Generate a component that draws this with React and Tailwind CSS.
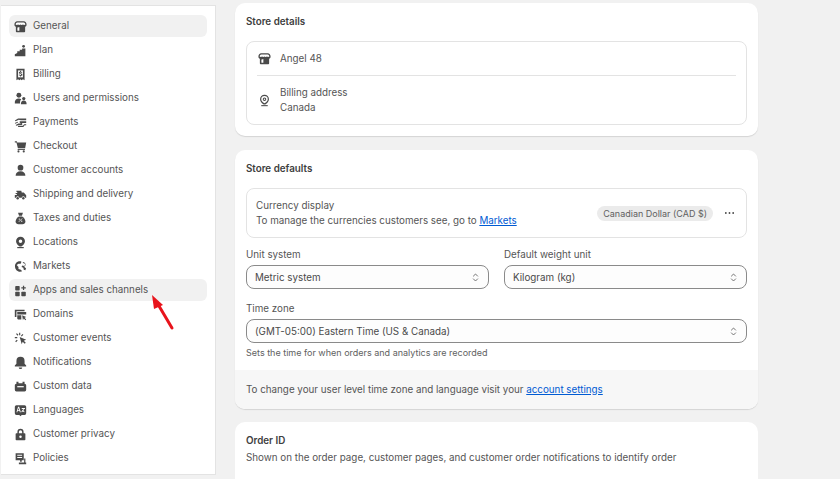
const ICONS = {
  store: (
    <>
      <path d="M4 1.500h8c2 0 3.500 2 3.500 4.200 0 1.200-.8 2.100-1.800 2.500V14a1 1 0 0 1-1 1H3.300a1 1 0 0 1-1-1V8.200C1.300 7.800.5 6.900.5 5.700.5 3.500 2 1.500 4 1.500z" />
      <path fill="#fff" d="M4 3.200h8c1 0 1.800 1 2 2.300-.9.800-2 .800-3 0-.9.800-2.100.800-3 0-.9.800-2.100.800-3 0-1 .800-2.100.800-3 0 .2-1.300 1-2.300 2-2.300zM4.200 9.200c.9.100 1.700-.1 2.400-.5v4.600H4.200z" />
    </>
  ),
  plan: (
    <>
      <path d="M1 15v-2.500l3-1.500V9h3V7h3V5.500h4V15z" />
      <circle cx="11.800" cy="2.800" r="1.700" />
    </>
  ),
  billing: (
    <>
      <path d="M3 1h10v14l-2-1.300L9.300 15 8 13.700 6.700 15 5 13.700 3 15z" />
      <path fill="#fff" d="M5 3h6v8.500H5z" />
      <path d="M7.500 3.500h1.200v1c.7.100 1.200.4 1.500.8l-.7.800c-.5-.5-1.900-.7-1.900 0 0 .8 2.800.5 2.800 2.100 0 .8-.6 1.300-1.700 1.400v1H7.500v-1c-.7-.1-1.300-.4-1.700-.9l.7-.8c.6.600 2.300.9 2.300.1 0-.8-2.800-.5-2.800-2.100 0-.8.600-1.300 1.500-1.400z" />
    </>
  ),
  users: (
    <>
      <circle cx="6" cy="4" r="3" />
      <path d="M1 14c-.4-3.700 1.600-6 5-6 1.200 0 2.200.3 3 .9C7.700 10 7.300 12 7.500 14z" />
      <circle cx="12" cy="8" r="2" />
      <path d="M8.500 15c-.2-2.600 1.200-4.500 3.500-4.500s3.700 1.900 3.500 4.500z" />
    </>
  ),
  payments: (
    <>
      <path d="M5 3h10v2.300H8.500L5.800 4.700 2 6.500 1 5.500z" />
      <path d="M7 6.500h8v2H9.500l1 1.200-1 1.300H6L3 12l-1-1 3.500-1.700h3L7 8z" />
      <path d="M1 8.500 4.500 7l.5 1-3.500 1.500zM5 12h6l1.500-2h2.500v1.500h-2L11.500 13.500H5z" />
    </>
  ),
  cart: (
    <>
      <path d="M1 1.500h2.500l.4 1.500H15l-1.300 7H4.800L3 3H1z" />
      <path d="M4.500 11h9v1.200h-9z" />
      <circle cx="5.500" cy="14" r="1.300" />
      <circle cx="12" cy="14" r="1.300" />
    </>
  ),
  person: (
    <>
      <circle cx="8" cy="4.500" r="3.500" />
      <path d="M2 14.500c0-3.500 2.500-5.500 6-5.500s6 2 6 5.500z" />
    </>
  ),
  truck: (
    <>
      <path d="M3 3.500h6l.5 2H12l3 3.500v3h-1.500a2 2 0 0 0-4 0H6.500a2 2 0 0 0-4 0H1V8.500h2.500V7.500H2V6h2V5H3z" />
      <circle cx="4.500" cy="12.500" r="1.500" />
      <circle cx="11.500" cy="12.500" r="1.500" />
    </>
  ),
  bag: (
    <>
      <path d="M5 1h6L9.800 4.500H6.200z" />
      <path d="M6 5.500h4c2.500 1.500 4 4 4 6.300C14 14 12.500 15 10.500 15h-5C3.500 15 2 14 2 11.800c0-2.300 1.500-4.800 4-6.300z" />
      <path stroke="#fff" strokeWidth="1" fill="none" d="m6 12 4-4" />
      <circle cx="6.500" cy="8.700" r=".8" fill="#fff" />
      <circle cx="9.500" cy="11.300" r=".8" fill="#fff" />
    </>
  ),
  pin: (
    <>
      <path fillRule="evenodd" d="M8 1a5.500 5.500 0 0 1 5.500 5.500c0 2.800-2.200 5.100-4.500 6.300H7C4.700 11.600 2.500 9.300 2.500 6.500A5.500 5.500 0 0 1 8 1zm0 3.300a2.200 2.200 0 1 0 0 4.400 2.200 2.200 0 0 0 0-4.400z" />
      <path d="M4 13.500h8V15H4z" />
    </>
  ),
  pinOutline: (
    <>
      <path fillRule="evenodd" d="M8 1a5.500 5.500 0 0 1 5.500 5.500c0 2.800-2.200 5.100-4.500 6.300H7C4.700 11.600 2.500 9.300 2.500 6.500A5.500 5.500 0 0 1 8 1zm0 1.500a4 4 0 0 0-4 4c0 2 1.800 3.800 4 4.900 2.200-1.100 4-2.900 4-4.900a4 4 0 0 0-4-4z" />
      <path fillRule="evenodd" d="M8 4.300a2.200 2.200 0 1 1 0 4.400 2.200 2.200 0 0 1 0-4.400zm0 1.300a.9.900 0 1 0 0 1.800.9.900 0 0 0 0-1.800z" />
      <path d="M4 13.700h8V15H4z" />
    </>
  ),
  globe: (
    <>
      <path d="M7 1.500c-3.300 0-5.800 2.800-5.800 6.200C1.200 11.500 4 14.500 7.500 14.500c1 0 1.800-.2 2.500-.6L8.500 12l-3-1V8.500L3.300 6.300 5.500 4.500l2.700.2 1-2.700C8.600 1.700 7.800 1.500 7 1.500z" />
      <path d="M10.500 3.500 14 5l-1.500 2.500-2.300-.7-1 1.700 2.300 1 .5 2.500 2 .7.800-2.700-2-1.500.2-1.500 1.500-.5-.7-2.500L12 2.500z" />
    </>
  ),
  apps: (
    <>
      <rect x="1.500" y="2.500" width="5.500" height="5.500" rx="1" />
      <rect x="1.500" y="9.500" width="5.500" height="5.500" rx="1" />
      <rect x="9" y="9.500" width="5.500" height="5.500" rx="1" />
      <path d="M11 2h1.500v2h2v1.500h-2v2H11v-2H9V4h2z" />
    </>
  ),
  domains: (
    <>
      <path d="M1 2h12v2H3v7H1z" />
      <path d="M4 5h11v3H4zM4 9h5v5H5a1 1 0 0 1-1-1z" />
      <path d="m10 9 5 2-2 1 2 2-1 1-2-2-1 2z" />
    </>
  ),
  events: (
    <>
      <path d="m7 6 8 3.500-3 1.200 2.500 2.500-1.300 1.300-2.500-2.500L9.500 15z" />
      <path d="M6.300 1h1.400v3H6.300zM1 6.300h3v1.400H1zM2.500 2.500l1-1 2 2-1 1zM10.500 2.500l1 1-2 2-1-1zM3.500 9.500l1 1-2 2-1-1z" />
    </>
  ),
  bell: (
    <>
      <path d="M8 1a5 5 0 0 1 5 5v3.500l2 2.300V13H1v-1.200l2-2.300V6a5 5 0 0 1 5-5z" />
      <path d="M5.800 14h4.400a2.200 2 0 0 1-4.400 0z" />
    </>
  ),
  data: (
    <>
      <path d="M3 2h2.500v2h5V2H13v2.500c1.200.2 2 1 2 2.200V12a2 2 0 0 1-2 2H3a2 2 0 0 1-2-2V6.700c0-1.200.8-2 2-2.200z" />
      <path fill="#fff" d="M4 7.500h8V9H4z" />
    </>
  ),
  lang: (
    <>
      <path d="M3 1.500h10A2 2 0 0 1 15 3.500v8a2 2 0 0 1-2 2H9.500L8 15l-1.500-1.500H3a2 2 0 0 1-2-2v-8a2 2 0 0 1 2-2z" />
      <path fill="#fff" d="M5 3.500h1.300L8.400 10H7.200l-.4-1.300H4.500L4.100 10H3zM5.650 5l-.8 2.600h1.600zM9.500 5h4v1h-.9c-.2 1-.6 1.800-1 2.400l1.500 1-.5.800-1.700-1.100-1.500 1.200-.6-.8 1.500-1.100-.6-1 .9-.4.400.7c.3-.5.500-1 .6-1.700H9.500z" />
    </>
  ),
  lock: (
    <>
      <path fillRule="evenodd" d="M8 1a3.800 3.800 0 0 1 3.800 3.800V6.500H13a1 1 0 0 1 1 1V14a1 1 0 0 1-1 1H3a1 1 0 0 1-1-1V7.500a1 1 0 0 1 1-1h1.200V4.800A3.800 3.800 0 0 1 8 1zm0 1.800a2 2 0 0 0-2 2v1.700h4V4.800a2 2 0 0 0-2-2z" />
      <circle cx="8" cy="10.800" r="1.500" fill="#fff" />
    </>
  ),
  policies: (
    <>
      <path fillRule="evenodd" d="M2 1.500h10v8.500H9.500v2H7.500V10H2zM4 3.500v1.200h6V3.500zm0 2.800v1.200h6V6.300z" />
      <path d="M6 13h9v2H6zM12.500 8H14v5h-1.500z" />
    </>
  ),
};

const NAV = [
  ['store', 'General'],
  ['plan', 'Plan'],
  ['billing', 'Billing'],
  ['users', 'Users and permissions'],
  ['payments', 'Payments'],
  ['cart', 'Checkout'],
  ['person', 'Customer accounts'],
  ['truck', 'Shipping and delivery'],
  ['bag', 'Taxes and duties'],
  ['pin', 'Locations'],
  ['globe', 'Markets'],
  ['apps', 'Apps and sales channels'],
  ['domains', 'Domains'],
  ['events', 'Customer events'],
  ['bell', 'Notifications'],
  ['data', 'Custom data'],
  ['lang', 'Languages'],
  ['lock', 'Customer privacy'],
  ['policies', 'Policies'],
];

const ACTIVE = ['General', 'Apps and sales channels'];

function Icon({ name, className = '' }) {
  return (
    <svg viewBox="0 0 16 16" fill="#4a4a4a" className={`w-[13px] h-[13px] shrink-0 ${className}`}>
      {ICONS[name]}
    </svg>
  );
}

function Select({ value }) {
  return (
    <div className="flex items-center justify-between h-6 pl-[8px] pr-[9px] rounded-lg border border-[#8a8a8a] bg-[#fdfdfd] text-[#4a4a4a]">
      <span className="pt-[2px]">{value}</span>
      <svg viewBox="0 0 10 14" fill="none" stroke="#5c5c5c" strokeWidth="1.200" strokeLinecap="round" strokeLinejoin="round" className="w-[7px] h-[11px]">
        <path d="M2 5l3-3 3 3M2 9l3 3 3-3" />
      </svg>
    </div>
  );
}

export default function App() {
  return (
    <div className="relative flex h-[479px] w-[840px] overflow-hidden bg-[#f1f1f1] font-['Inter',sans-serif] text-[9.800px] leading-[14px] text-[#555555]">
      <div className="ml-px mt-[5px] w-[215px] h-[470px] shrink-0 bg-white border-y border-r border-[#e3e3e3] border-l-0 pt-[9px] px-2 box-border">
        {NAV.map(([icon, label]) => (
          <div
            key={label}
            className={`flex items-center h-[22px] mb-[2px] pl-[5px] gap-[6px] rounded-md ${ACTIVE.includes(label) ? 'bg-[#f1f1f1]' : ''}`}
          >
            <Icon name={icon} />
            <span>{label}</span>
          </div>
        ))}
      </div>

      <div className="ml-[19px] w-[523px] shrink-0 pt-[3px] flex flex-col">
        <div className="bg-white rounded-[10px] shadow-[0_1px_1px_rgba(0,0,0,0.12)] px-[11px] pt-[12px] h-[133px] mb-[14px]">
          <h2 className="font-semibold text-[#404040]">Store details</h2>
          <div className="mt-[12px] rounded-lg border border-[#e3e3e3] px-[10px] h-[84px]">
            <div className="flex items-center h-[34px] gap-[9px] border-b border-[#e3e3e3]">
              <Icon name="store" className="ml-px" />
              <span>Angel 48</span>
            </div>
            <div className="flex items-center h-[48px] gap-[9px]">
              <Icon name="pinOutline" className="ml-px" />
              <div className="leading-[15px]">
                <div>Billing address</div>
                <div>Canada</div>
              </div>
            </div>
          </div>
        </div>

        <div className="bg-white rounded-[10px] shadow-[0_1px_1px_rgba(0,0,0,0.12)] h-[259px] mb-[13px] overflow-hidden flex flex-col">
          <div className="px-[11px] pt-[12px] flex-1">
            <h2 className="font-semibold text-[#404040]">Store defaults</h2>
            <div className="mt-[12px] h-[50px] rounded-lg border border-[#e3e3e3] pl-[9px] pr-[11px] flex items-center justify-between">
              <div className="leading-[15px]">
                <div>Currency display</div>
                <div>
                  To manage the currencies customers see, go to <span className="text-[#005bd3] underline">Markets</span>
                </div>
              </div>
              <div className="flex items-center gap-[11px]">
                <span className="rounded-full bg-[#ebebeb] px-[6px] h-[15px] leading-[15px] text-[9px] text-[#616161]">Canadian Dollar (CAD $)</span>
                <svg viewBox="0 0 12 4" fill="#4a4a4a" className="w-[11px] h-1">
                  <circle cx="2" cy="2" r="1" />
                  <circle cx="6" cy="2" r="1" />
                  <circle cx="10" cy="2" r="1" />
                </svg>
              </div>
            </div>
            <div className="mt-[10px] grid grid-cols-2 gap-[15px]">
              <div>
                <div className="mb-[3px]">Unit system</div>
                <Select value="Metric system" />
              </div>
              <div>
                <div className="mb-[3px]">Default weight unit</div>
                <Select value="Kilogram (kg)" />
              </div>
            </div>
            <div className="mt-[13px]">
              <div className="mb-[3px]">Time zone</div>
              <Select value="(GMT-05:00) Eastern Time (US & Canada)" />
              <div className="mt-[3px] text-[9px] text-[#616161]">Sets the time for when orders and analytics are recorded</div>
            </div>
          </div>
          <div className="h-[39px] bg-[#f7f7f7] px-[11px] flex items-center">
            <span>
              To change your user level time zone and language visit your <span className="text-[#005bd3] underline">account settings</span>
            </span>
          </div>
        </div>

        <div className="bg-white rounded-t-[10px] px-[11px] pt-[12px] flex-1">
          <h2 className="font-semibold text-[#404040]">Order ID</h2>
          <p className="mt-[3px]">Shown on the order page, customer pages, and customer order notifications to identify order</p>
        </div>
      </div>

      <svg viewBox="0 0 30 45" className="absolute left-[148px] top-[292px] w-[30px] h-[45px]">
        <path d="M24 36 11 14" stroke="#e8141c" strokeWidth="3" strokeLinecap="round" fill="none" />
        <path d="M4 3 15 13 6 17z" fill="#e8141c" />
      </svg>
    </div>
  );
}
